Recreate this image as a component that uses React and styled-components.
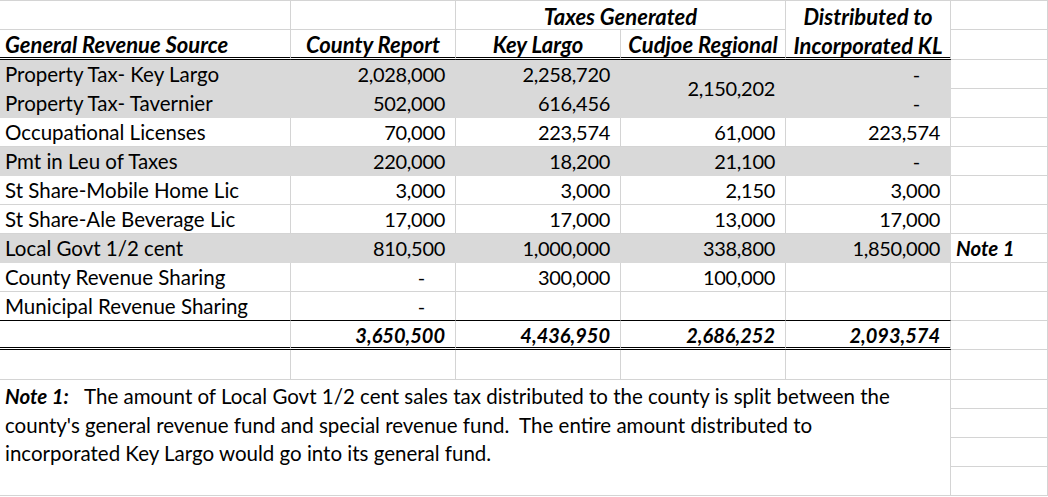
import styled, { createGlobalStyle } from "styled-components";

const GlobalStyle = createGlobalStyle`
  body {
    margin: 0;
    background: #fff;
    font-family: Lato, "Liberation Sans", sans-serif;
    color: #000;
  }
`;

const GRID = "#d4d4d4";
const SHADE = "#d9d9d9";

const rows = [
  { label: "Property Tax- Key Largo", values: ["2,028,000", "2,258,720", "2,150,202", "-"], shade: true, tall: true },
  { label: "Property Tax- Tavernier", values: ["502,000", "616,456", null, "-"], shade: true },
  { label: "Occupational Licenses", values: ["70,000", "223,574", "61,000", "223,574"] },
  { label: "Pmt in Leu of Taxes", values: ["220,000", "18,200", "21,100", "-"], shade: true },
  { label: "St Share-Mobile Home Lic", values: ["3,000", "3,000", "2,150", "3,000"] },
  { label: "St Share-Ale Beverage Lic", values: ["17,000", "17,000", "13,000", "17,000"] },
  { label: "Local Govt 1/2 cent", values: ["810,500", "1,000,000", "338,800", "1,850,000"], shade: true, note: "Note 1" },
  { label: "County Revenue Sharing", values: ["-", "300,000", "100,000", ""] },
  { label: "Municipal Revenue Sharing", values: ["-", "", "", ""], rule: "solid" },
];

const totals = ["3,650,500", "4,436,950", "2,686,252", "2,093,574"];

const App = () => {
  return (
    <>
      <GlobalStyle />
      <Sheet>
        {/* header */}
        <Cell />
        <Cell />
        <HeadCell $span={2} $align="center">Taxes Generated</HeadCell>
        <HeadCell $rows={2} $align="center" $rule="double">
          <Stack>
            <span>Distributed to</span>
            <span>Incorporated KL</span>
          </Stack>
        </HeadCell>
        <Cell />

        <HeadCell $rule="double">General Revenue Source</HeadCell>
        <HeadCell $align="center" $rule="double">County Report</HeadCell>
        <HeadCell $align="center" $rule="double">Key Largo</HeadCell>
        <HeadCell $align="center" $rule="double">Cudjoe Regional</HeadCell>
        <Cell />

        {rows.map((row) => (
          <Row key={row.label} row={row} />
        ))}

        <Cell $rule="double" />
        {totals.map((t) => (
          <Cell key={t} $align="right" $bold $rule="double">{t}</Cell>
        ))}
        <Cell />

        {[0, 1, 2, 3, 4].map((i) => (
          <Cell key={i} />
        ))}
        <Cell />

        <NoteCell>
          <Strong>Note 1:</Strong>&nbsp;&nbsp; The amount of Local Govt 1/2 cent sales tax distributed to the county is split between the
          <br />
          county's general revenue fund and special revenue fund.&nbsp; The entire amount distributed to
          <br />
          incorporated Key Largo would go into its general fund.
        </NoteCell>
        <Cell />
        <Cell />
        <Cell />
        <Cell />
      </Sheet>
    </>
  );
};

const Row = ({ row }) => (
  <>
    <Cell $shade={row.shade} $rule={row.rule}>{row.label}</Cell>
    {row.values.map((v, i) => {
      if (v === null) return null;
      const merged = row.tall && i === 2;
      return (
        <Cell
          key={i}
          $shade={row.shade}
          $rule={row.rule}
          $align="right"
          $rows={merged ? 2 : 1}
          $middle={merged}
        >
          {v === "-" ? <Dash>-</Dash> : v}
        </Cell>
      );
    })}
    <Cell $bold>{row.note || ""}</Cell>
  </>
);

const Sheet = styled.div`
  display: grid;
  grid-template-columns: 291px 165px 165px 165px 165px 1fr;
  grid-template-rows: 29px 30px repeat(10, 29px) 30px repeat(4, 29px);
  width: 1048px;
  border-top: 1px solid ${GRID};
  font-size: 20.5px;
`;

const Cell = styled.div`
  box-sizing: border-box;
  display: flex;
  align-items: ${(p) => (p.$middle ? "center" : "flex-end")};
  justify-content: ${(p) =>
    p.$align === "right" ? "flex-end" : p.$align === "center" ? "center" : "flex-start"};
  grid-column: span ${(p) => p.$span || 1};
  grid-row: span ${(p) => p.$rows || 1};
  padding: 0 ${(p) => (p.$align === "right" ? "10px" : "5px")}
    ${(p) => (p.$rule === "double" ? "0" : "2px")} 5px;
  background: ${(p) => (p.$shade ? SHADE : "#fff")};
  border-right: 1px solid ${(p) => (p.$shade ? SHADE : GRID)};
  border-bottom: ${(p) =>
    p.$rule === "double"
      ? "3px double #000"
      : p.$rule === "solid"
      ? "1px solid #000"
      : `1px solid ${p.$shade ? SHADE : GRID}`};
  font-size: ${(p) => (p.$align === "right" ? "20px" : "inherit")};
  letter-spacing: ${(p) => (p.$align === "right" && !p.$bold ? "-0.3px" : "0")};
  font-weight: ${(p) => (p.$bold ? 700 : 400)};
  font-style: ${(p) => (p.$bold ? "italic" : "normal")};
  line-height: 24px;
  white-space: nowrap;
`;

const HeadCell = styled(Cell)`
  padding-bottom: 0;
  font-size: 22px;
  font-weight: 700;
  font-style: italic;
  letter-spacing: 0;
`;

const Stack = styled.div`
  display: flex;
  flex-direction: column;
  align-items: center;
  gap: 5px;
  margin-bottom: -1px;
`;

const Dash = styled.span`
  margin-right: 20px;
`;

const NoteCell = styled.div`
  grid-column: span 5;
  grid-row: span 4;
  box-sizing: border-box;
  padding: 2px 5px 0;
  border-right: 1px solid ${GRID};
  border-bottom: 1px solid ${GRID};
  line-height: 28.5px;
`;

const Strong = styled.span`
  font-weight: 700;
  font-style: italic;
`;

export default App;
